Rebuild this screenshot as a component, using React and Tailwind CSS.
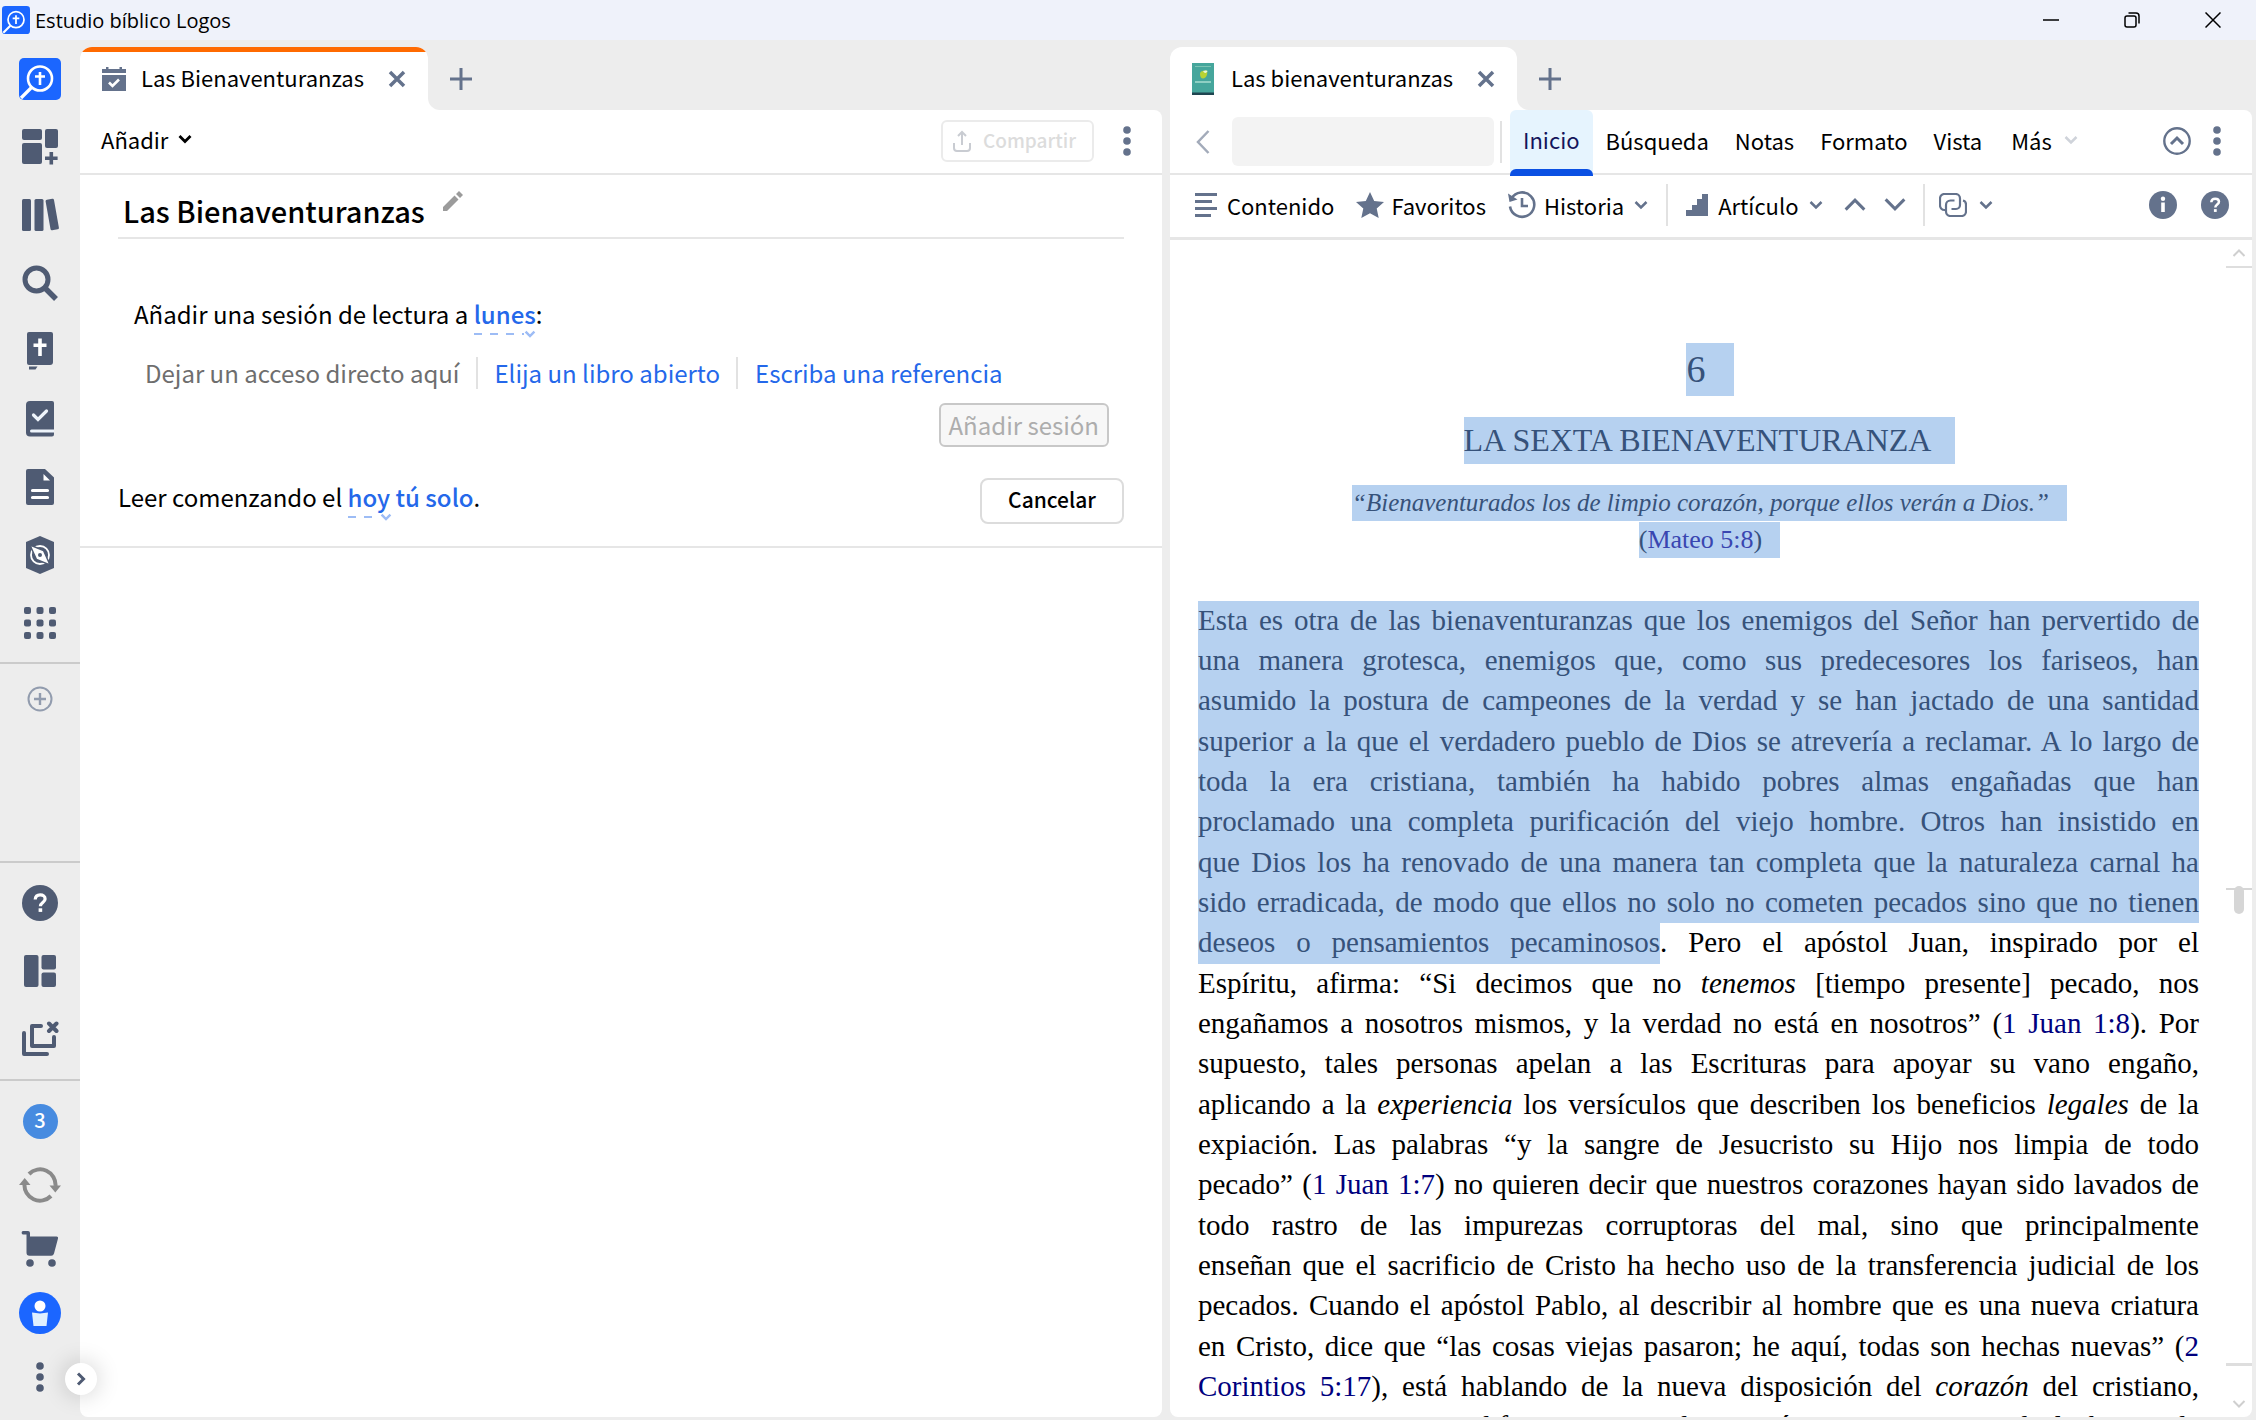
/* eslint-disable react/prop-types */
import React from 'react'

const slate = '#64728c'

const LogosMark = ({ className }) => (
  <svg viewBox="0 0 42 42" className={className} aria-hidden="true">
    <rect width="42" height="42" rx="5" fill="#1b66ff" />
    <circle cx="21" cy="20.500" r="12" fill="none" stroke="#fff" strokeWidth="2.600" />
    <path d="M12.500 29.500L2 40" stroke="#fff" strokeWidth="3.200" />
    <path d="M21 14v13M16 18.500h10" stroke="#fff" strokeWidth="2.600" />
  </svg>
)

const LayoutAddIcon = () => (
  <svg viewBox="0 0 36 36" className="size-9" fill="#4f5b73">
    <rect width="20" height="11" rx="2" />
    <rect y="14" width="20" height="21" rx="2" />
    <rect x="23" width="13" height="19" rx="2" />
    <path d="M27.500 23h3.600v4.500h4.500v3.600h-4.500v4.500h-3.600v-4.500H23v-3.600h4.500z" />
  </svg>
)

const LibraryIcon = () => (
  <svg viewBox="0 0 38 34" className="h-[34px] w-[38px]" fill="#4f5b73">
    <rect x="1" y="1" width="9" height="32" rx="1.500" />
    <rect x="13.500" y="1" width="9" height="32" rx="1.500" />
    <rect x="27" y="1" width="8.500" height="31" rx="1.500" transform="rotate(-10 31 16.500)" />
  </svg>
)

const SearchIcon = () => (
  <svg viewBox="0 0 36 36" className="size-9" fill="none" stroke="#4f5b73">
    <circle cx="14.500" cy="14.500" r="11.500" strokeWidth="5" />
    <path d="M23 23l11 11" strokeWidth="5.500" />
  </svg>
)

const BibleIcon = () => (
  <svg viewBox="0 0 28 40" className="h-10 w-7" fill="#4f5b73">
    <path d="M3 1h22a2 2 0 0 1 2 2v28a3 3 0 0 1-3 3H3a2 2 0 0 1-2-2V3a2 2 0 0 1 2-2z" />
    <path d="M12.200 7.500h3.600v5h4.700v3.600h-4.700V25h-3.600v-8.900H7.500v-3.600h4.700z" fill="#fff" />
    <path d="M3 35.500h8.500l-2 3H3z" />
  </svg>
)

const CourseIcon = () => (
  <svg viewBox="0 0 28 36" className="h-9 w-7">
    <path d="M4 0h22a2 2 0 0 1 2 2v31.500a2 2 0 0 1-2 2H4a4 4 0 0 1-4-4V4a4 4 0 0 1 4-4z" fill="#4f5b73" />
    <path d="M28 30H5.500" stroke="#eef4fb" strokeWidth="3" strokeLinecap="round" />
    <path d="M7.500 14l4.500 4.500L20.500 10" fill="none" stroke="#eef4fb" strokeWidth="3.200" strokeLinecap="round" />
  </svg>
)

const DocumentIcon = () => (
  <svg viewBox="0 0 28 36" className="h-9 w-7">
    <path d="M2 0h17l9 8.500V34a2 2 0 0 1-2 2H2a2 2 0 0 1-2-2V2a2 2 0 0 1 2-2z" fill="#4f5b73" />
    <path d="M17.500 5l6.500 6.500h-6.500z" fill="#fff" />
    <path d="M6.500 21.500h15M6.500 28.500h15" stroke="#fff" strokeWidth="3.200" strokeLinecap="round" />
  </svg>
)

const FactbookIcon = () => (
  <svg viewBox="0 0 28 38" className="h-[38px] w-7">
    <path d="M14 0l14 6v26l-14 6-14-6V6z" fill="#4f5b73" />
    <circle cx="14" cy="19" r="9" fill="none" stroke="#fff" strokeWidth="1.800" />
    <path d="M4 9l13.500 5.500L24 29l-13.500-5.500z" fill="#fff" stroke="#4f5b73" strokeWidth="1.400" />
    <circle cx="14" cy="19" r="2" fill="#4f5b73" />
  </svg>
)

const GridIcon = () => (
  <svg viewBox="0 0 32 32" className="size-8" fill="#4f5b73">
    {[0, 12.5, 25].map((y) =>
      [0, 12.5, 25].map((x) => (
        <rect key={`${x}-${y}`} x={x} y={y} width="7" height="7" rx="2" />
      )),
    )}
  </svg>
)

const CirclePlusIcon = () => (
  <svg viewBox="0 0 26 26" className="size-[26px]" fill="none" stroke="#929cae" strokeWidth="2">
    <circle cx="13" cy="13" r="11.500" />
    <path d="M13 7v12M7 13h12" strokeWidth="2.400" />
  </svg>
)

const HelpIcon = ({ className, fill }) => (
  <svg viewBox="0 0 36 36" className={className}>
    <circle cx="18" cy="18" r="18" fill={fill} />
    <path
      d="M13.200 14.500c.2-3 2.200-4.600 5-4.600 2.900 0 4.900 1.600 4.900 4 0 3.500-4.700 3.600-4.700 7.300"
      fill="none"
      stroke="#fff"
      strokeWidth="3.200"
    />
    <rect x="16.600" y="23.300" width="3.600" height="3.600" fill="#fff" />
  </svg>
)

const PanelsIcon = () => (
  <svg viewBox="0 0 32 32" className="size-8" fill="#4f5b73">
    <rect width="14.500" height="32" rx="2" />
    <rect x="17.500" width="14.500" height="14.500" rx="2" />
    <rect x="17.500" y="17.500" width="14.500" height="14.500" rx="2" />
  </svg>
)

const CloseAllIcon = () => (
  <svg
    viewBox="0 0 38 38"
    className="size-[38px]"
    fill="none"
    stroke="#4f5b73"
    strokeWidth="4"
    strokeLinecap="round"
    strokeLinejoin="round"
  >
    <path d="M20 6h-9v20h22v-9" />
    <path d="M3 13v21h23" />
    <path d="M28 3.500l7.500 7.500M35.500 3.500L28 11" />
  </svg>
)

const SyncIcon = () => (
  <svg viewBox="0 0 42 36" className="h-9 w-[42px]">
    <g fill="none" stroke="#8a8a8a" strokeWidth="4">
      <path d="M10 7A15.500 15.500 0 0 1 36.500 19" />
      <path d="M32 29A15.500 15.500 0 0 1 5.500 17" />
    </g>
    <path d="M30.500 18.500H42l-5.700 7zM0 18l5.700-7 5.800 7z" fill="#8a8a8a" />
  </svg>
)

const CartIcon = () => (
  <svg viewBox="0 0 40 36" className="h-9 w-10" fill="#4f5b73">
    <path d="M3 0h5a2 2 0 0 1 2 2v3.500h26.500a1.500 1.500 0 0 1 1.500 2l-4 15a3 3 0 0 1-3 2.200H9.500a3 3 0 0 1-3-3V3.500H3A1.800 1.800 0 0 1 3 0z" />
    <circle cx="10" cy="32" r="3.800" />
    <circle cx="32" cy="32" r="3.800" />
  </svg>
)

const AvatarIcon = () => (
  <svg viewBox="0 0 42 42" className="size-[42px]">
    <circle cx="21" cy="21" r="21" fill="#1b66ff" />
    <circle cx="21" cy="14" r="5.500" fill="#fff" />
    <path d="M13 20.500c3 0 5 1 8 1s5-1 8-1L27.500 34h-13z" fill="#dff0ff" />
  </svg>
)

const Dots = ({ fill }) => (
  <svg viewBox="0 0 8 30" className="h-[30px] w-2" fill={fill}>
    <circle cx="4" cy="4" r="3.800" />
    <circle cx="4" cy="15" r="3.800" />
    <circle cx="4" cy="26" r="3.800" />
  </svg>
)

const Chevron = ({ className, stroke = slate, strokeWidth = 2.5 }) => (
  <svg viewBox="0 0 14 10" className={className} fill="none" stroke={stroke} strokeWidth={strokeWidth}>
    <path d="M1.500 2L7 7.500 12.500 2" />
  </svg>
)

const CrossIcon = () => (
  <svg viewBox="0 0 18 18" className="size-[18px]" stroke={slate} strokeWidth="3.500">
    <path d="M2 2l14 14M16 2L2 16" />
  </svg>
)

const PlusIcon = () => (
  <svg viewBox="0 0 22 22" className="size-[22px]" stroke={slate} strokeWidth="3">
    <path d="M11 0v22M0 11h22" />
  </svg>
)

const CalendarIcon = () => (
  <svg viewBox="0 0 24 24" className="size-6" fill={slate}>
    <path d="M0 2h4V0h2.500v2h11V0H20v2h4v4H0zM0 8h24v16H0z" />
    <path d="M7 15.500l3.500 3.500 6.500-6.500" fill="none" stroke="#fff" strokeWidth="2.600" />
  </svg>
)

const CoverIcon = () => (
  <svg viewBox="0 0 22 32" className="h-8 w-[22px]">
    <rect width="22" height="32" fill="#46a69c" />
    <path d="M3 3.500h16" stroke="#7cc4b4" strokeWidth="1" />
    <path d="M8 11c0-3 3-3.500 7-3.500 1 4-1 8-4 8-2 0-3-2-3-4.500z" fill="#b7d334" />
    <path d="M11 8c2-1 4-.5 4.500 0-.5 2-3 3-4.500 0z" fill="#e9f6d6" />
    <path d="M3 19h16" stroke="#a9ddd0" strokeWidth="1.600" />
    <rect y="29.500" width="22" height="2.500" fill="#1f4550" />
  </svg>
)

const topTools = [
  { label: 'Inicio de Logos', icon: <LogosMark className="size-[42px]" /> },
  { label: 'Diseños', icon: <LayoutAddIcon /> },
  { label: 'Biblioteca', icon: <LibraryIcon /> },
  { label: 'Buscar', icon: <SearchIcon /> },
  { label: 'Biblia', icon: <BibleIcon /> },
  { label: 'Cursos', icon: <CourseIcon /> },
  { label: 'Documentos', icon: <DocumentIcon /> },
  { label: 'Factbook', icon: <FactbookIcon /> },
  { label: 'Herramientas', icon: <GridIcon /> },
]

const midTools = [
  { label: 'Ayuda', icon: <HelpIcon className="size-9" fill="#4f5b73" /> },
  { label: 'Paneles', icon: <PanelsIcon /> },
  { label: 'Cerrar todo', icon: <CloseAllIcon /> },
]

const Sidebar = () => (
  <nav className="flex w-20 shrink-0 flex-col">
    <div className="border-b-2 border-[#cbcbcb] py-[5px]">
      {topTools.map(({ label, icon }) => (
        <button key={label} type="button" aria-label={label} className="flex h-[68px] w-full items-center justify-center">
          {icon}
        </button>
      ))}
    </div>
    <div className="flex-1 border-b-2 border-[#cbcbcb]">
      <button type="button" aria-label="Añadir acceso" className="flex h-[70px] w-full items-center justify-center">
        <CirclePlusIcon />
      </button>
    </div>
    <div className="border-b-2 border-[#cbcbcb] py-1.5">
      {midTools.map(({ label, icon }) => (
        <button key={label} type="button" aria-label={label} className="flex h-[68px] w-full items-center justify-center">
          {icon}
        </button>
      ))}
    </div>
    <div className="pt-2 pb-[11px] [&>*]:flex [&>*]:h-16 [&>*]:w-full [&>*]:items-center [&>*]:justify-center">
      <button type="button">
        <span className="flex size-[35px] items-center justify-center rounded-full bg-[#478be0] pb-0.5 text-xl font-medium text-white">
          3
        </span>
      </button>
      <button type="button" aria-label="Sincronizar">
        <SyncIcon />
      </button>
      <button type="button" aria-label="Tienda">
        <CartIcon />
      </button>
      <button type="button" aria-label="Cuenta">
        <AvatarIcon />
      </button>
      <div className="relative">
        <button type="button" aria-label="Más opciones">
          <Dots fill="#4f5b73" />
        </button>
        <button
          type="button"
          aria-label="Expandir"
          className="absolute top-[18px] left-[65px] z-10 flex size-8 items-center justify-center rounded-full bg-white shadow-[0_0_24px_rgba(0,0,0,0.2)]"
        >
          <Chevron className="h-[10px] w-[14px] -rotate-90" stroke="#4f5b73" strokeWidth={3} />
        </button>
      </div>
    </div>
  </nav>
)

const TitleBar = () => (
  <header className="flex h-10 items-center bg-[#eff2fa]">
    <LogosMark className="ml-0.5 size-7" />
    <h1 className="ml-[5px] flex-1 pt-0.5 font-['Open_Sans',sans-serif] text-xl leading-6">Estudio bíblico Logos</h1>
    <div className="flex pr-[3px] [&>button]:flex [&>button]:h-10 [&>button]:w-[81px] [&>button]:items-center [&>button]:justify-center">
      <button type="button" aria-label="Minimizar">
        <svg viewBox="0 0 16 16" className="size-4" stroke="#000" strokeWidth="1.500">
          <path d="M0 8h16" />
        </svg>
      </button>
      <button type="button" aria-label="Restaurar">
        <svg viewBox="0 0 16 16" className="size-4" fill="none" stroke="#000" strokeWidth="1.500">
          <rect x="1" y="4" width="11" height="11" rx="2" />
          <path d="M4.500 1H12a3 3 0 0 1 3 3v7.500" />
        </svg>
      </button>
      <button type="button" aria-label="Cerrar">
        <svg viewBox="0 0 16 16" className="size-4" stroke="#000" strokeWidth="1.500">
          <path d="M.5.5l15 15M15.500.5l-15 15" />
        </svg>
      </button>
    </div>
  </header>
)

const TabStrip = ({ icon, title, active }) => (
  <div className="mt-[7px] flex h-[63px] bg-white">
    <div className="bg-[#ededed]">
      <div className="flex h-full items-center overflow-hidden rounded-t-xl bg-white">
        <div className={`flex h-full items-center px-[22px] ${active ? 'border-t-[5px] border-[#ff6a00] pb-[5px]' : ''}`}>
          {icon}
          <span className={active ? 'ml-[15px] pb-1' : 'ml-[17px] pb-1'}>{title}</span>
          <button type="button" aria-label="Cerrar pestaña" className="ml-6">
            <CrossIcon />
          </button>
        </div>
      </div>
    </div>
    <div className="flex flex-1 items-center rounded-bl-xl bg-[#ededed] pl-[22px]">
      <button type="button" aria-label="Nueva pestaña">
        <PlusIcon />
      </button>
    </div>
  </div>
)

const MenuWord = ({ children, underline }) => (
  <button type="button" className="relative font-medium text-[#2468ea]">
    {children}
    <span className={`absolute top-full left-0 flex items-center ${underline}`}>
      <span className="h-0.5 flex-1 bg-[repeating-linear-gradient(90deg,#9dbcf5_0_8px,transparent_8px_16px)]" />
      <Chevron className="h-2 w-3" stroke="#9dbcf5" strokeWidth={3} />
    </span>
  </button>
)

const ReadingPlanPanel = () => (
  <section className="flex min-w-0 flex-[1082] flex-col">
    <TabStrip active icon={<CalendarIcon />} title="Las Bienaventuranzas" />
    <div className="flex-1 rounded-tr-lg rounded-b-lg bg-white">
      <div className="flex h-[65px] items-center border-b-2 border-[#e6e6e6] pr-[31px] pb-0.5 pl-[21px]">
        <button type="button" className="flex items-center gap-2.5 pb-1">
          Añadir
          <Chevron className="h-[10px] w-[14px]" stroke="#000" strokeWidth={2.8} />
        </button>
        <button
          type="button"
          disabled
          className="mr-[29px] ml-auto flex h-[42px] items-center gap-3 rounded-md border-2 border-[#ebebeb] pr-4 pl-2.5 text-[19px] leading-6 font-medium text-[#dcdcdc]"
        >
          <svg viewBox="0 0 18 22" className="h-[22px] w-[18px]" fill="none" stroke="#c9ccd2" strokeWidth="2">
            <path d="M9 15V2M5 6l4-4 4 4M1 13v5a3 3 0 0 0 3 3h10a3 3 0 0 0 3-3v-5" />
          </svg>
          <span className="pb-0.5">Compartir</span>
        </button>
        <button type="button" aria-label="Menú del panel">
          <Dots fill={slate} />
        </button>
      </div>

      <div className="px-[38px] text-2xl leading-8">
        <div className="flex h-16 items-center border-b-2 border-[#e6e6e6] pt-2 pl-[5px]">
          <h2 className="text-[29px] leading-10 font-medium">Las Bienaventuranzas</h2>
          <button type="button" aria-label="Editar título" className="ml-[18px] self-start pt-2">
            <svg viewBox="0 0 20 20" className="size-5" fill="#9b9b9b">
              <path d="M0 16L11.500 4.500l4 4L4 20H0zM13 3l3-3 4 4-3 3z" />
            </svg>
          </button>
        </div>

        <p className="mt-[59px] ml-4">
          Añadir una sesión de lectura a <MenuWord underline="w-[62px]">lunes</MenuWord>:
        </p>
        <div className="mt-[27px] ml-[27px] flex">
          <span className="border-r-2 border-[#e2e2e2] pr-[17px] text-[#6e6e6e]">Dejar un acceso directo aquí</span>
          <button type="button" className="border-r-2 border-[#e2e2e2] px-4 text-[#2468ea]">
            Elija un libro abierto
          </button>
          <button type="button" className="pl-[17px] text-[#2468ea]">
            Escriba una referencia
          </button>
        </div>
        <div className="mt-[14px] mr-[15px] flex justify-end">
          <button
            type="button"
            disabled
            className="h-11 rounded-md border-2 border-[#c8c8c8] bg-[#f7f7f7] px-2 text-[#adadad]"
          >
            Añadir sesión
          </button>
        </div>
        <div className="mt-[31px] flex items-center justify-between">
          <p className="pb-2">
            Leer comenzando el <MenuWord underline="w-[44px]">hoy</MenuWord>{' '}
            <button type="button" className="font-medium text-[#2468ea]">
              tú solo
            </button>
            .
          </p>
          <button
            type="button"
            className="h-[46px] w-36 rounded-lg border-2 border-[#dcdcdc] pb-1 text-[21px] font-medium"
          >
            Cancelar
          </button>
        </div>
      </div>
      <hr className="mt-[22px] border-t-2 border-[#e6e6e6]" />
    </div>
  </section>
)

const sections = ['Búsqueda', 'Notas', 'Formato', 'Vista']

const ResourceToolbar = () => (
  <>
    <div className="flex h-[65px] border-b-2 border-[#e6e6e6]">
      <button type="button" aria-label="Atrás" className="ml-[26px]">
        <svg viewBox="0 0 14 24" className="h-6 w-3.5" fill="none" stroke="#a3abba" strokeWidth="2.500">
          <path d="M12.500 1L2 12l10.500 11" />
        </svg>
      </button>
      <input
        type="text"
        aria-label="Referencia"
        className="my-auto ml-[22px] h-[49px] w-[262px] rounded-md bg-[#f3f3f3] px-3 outline-none"
      />
      <span className="my-auto mr-2 ml-1.5 h-[42px] w-0.5 bg-[#e2e2e2]" />
      <button
        type="button"
        className="relative h-16 rounded-t-md bg-[#e6f4fe] px-[13px] pb-1.5 text-[#14145c] after:absolute after:inset-x-0 after:-bottom-0.5 after:h-[7px] after:rounded-t-md after:bg-[#0b50e3]"
      >
        Inicio
      </button>
      {sections.map((label) => (
        <button key={label} type="button" className="px-[13px] pb-1">
          {label}
        </button>
      ))}
      <button type="button" className="flex items-center gap-3 px-4 pb-1">
        Más
        <Chevron className="h-[10px] w-[14px]" stroke="#cfd3da" />
      </button>
      <div className="mr-[31px] ml-auto flex items-center gap-[22px] pb-0.5">
        <button type="button" aria-label="Contraer barra">
          <svg viewBox="0 0 28 28" className="size-7" fill="none" stroke={slate} strokeWidth="2.400">
            <circle cx="14" cy="14" r="12.700" />
            <path d="M8 17l6-6 6 6" strokeWidth="3" />
          </svg>
        </button>
        <button type="button" aria-label="Menú del recurso">
          <Dots fill={slate} />
        </button>
      </div>
    </div>

    <div className="flex h-[65px] items-center border-b-[3px] border-[#e6e6e6] pb-[3px] pl-[25px]">
      <button type="button" className="flex items-center gap-2.5">
        <svg viewBox="0 0 22 26" className="h-[26px] w-[22px]" stroke={slate} strokeWidth="3">
          <path d="M0 2.500h22M0 9.500h17M0 16.500h22M0 23.500h16" />
        </svg>
        Contenido
      </button>
      <button type="button" className="ml-[22px] flex items-center gap-[7px]">
        <svg viewBox="0 0 28 26" className="h-[26px] w-7" fill={slate}>
          <path d="M14 0l4.200 9 9.800 1-7.300 6.500 2 9.500L14 21.300 5.300 26l2-9.500L0 10l9.800-1z" />
        </svg>
        Favoritos
      </button>
      <button type="button" className="ml-[22px] flex items-center gap-2">
        <svg viewBox="0 0 28 28" className="size-7" fill="none" stroke={slate} strokeWidth="2.600">
          <path d="M3.500 7.500A12.200 12.200 0 1 1 2 15.500" />
          <path d="M14 7v8h6" />
          <path d="M0 2.500L1.500 11l8-2.500z" fill={slate} stroke="none" />
        </svg>
        Historia
        <Chevron className="ml-0.5 h-[10px] w-[14px]" />
      </button>
      <span className="mx-[18px] h-[42px] w-0.5 bg-[#e2e2e2]" />
      <button type="button" className="flex items-center gap-2.5">
        <svg viewBox="0 0 22 22" className="size-[22px]" fill={slate}>
          <path d="M16 0h6v22H0v-6h6v-5h5V5h5z" />
        </svg>
        Artículo
        <Chevron className="h-[10px] w-[14px]" />
      </button>
      <button type="button" aria-label="Artículo anterior" className="ml-5">
        <Chevron className="h-[17px] w-6 rotate-180" strokeWidth={1.8} />
      </button>
      <button type="button" aria-label="Artículo siguiente" className="ml-4">
        <Chevron className="h-[17px] w-6" strokeWidth={1.8} />
      </button>
      <span className="mr-[14px] ml-4 h-[42px] w-0.5 bg-[#e2e2e2]" />
      <button type="button" aria-label="Vincular panel" className="flex items-center gap-3">
        <svg viewBox="0 0 28 24" className="h-6 w-7" fill="none" stroke={slate} strokeWidth="2.200">
          <path d="M8 17H5.500A4.500 4.500 0 0 1 1 12.500v-7A4.500 4.500 0 0 1 5.500 1h11A4.500 4.500 0 0 1 21 5.500V12a4 4 0 0 1-4 4h-4.500" />
          <path d="M24 7.500c2 .5 3 2 3 4v7a4.500 4.500 0 0 1-4.500 4.500h-11A4.500 4.500 0 0 1 7 18.500V12a4.500 4.500 0 0 1 4.500-4.500h4" />
        </svg>
        <Chevron className="h-[10px] w-[14px]" />
      </button>
      <div className="mr-[23px] ml-auto flex gap-6">
        <button type="button" aria-label="Información">
          <svg viewBox="0 0 28 28" className="size-7">
            <circle cx="14" cy="14" r="14" fill={slate} />
            <path d="M14 11.500V21" stroke="#fff" strokeWidth="3.600" />
            <circle cx="14" cy="7.800" r="2.200" fill="#fff" />
          </svg>
        </button>
        <button type="button" aria-label="Ayuda del recurso">
          <HelpIcon className="size-7" fill={slate} />
        </button>
      </div>
    </div>
  </>
)

const Ref = ({ children }) => (
  <a href="#ref" className="text-[#00007e]">
    {children}
  </a>
)

const selectedLines = [
  'Esta es otra de las bienaventuranzas que los enemigos del Señor han pervertido de',
  'una manera grotesca, enemigos que, como sus predecesores los fariseos, han',
  'asumido la postura de campeones de la verdad y se han jactado de una santidad',
  'superior a la que el verdadero pueblo de Dios se atrevería a reclamar. A lo largo de',
  'toda la era cristiana, también ha habido pobres almas engañadas que han',
  'proclamado una completa purificación del viejo hombre. Otros han insistido en',
  'que Dios los ha renovado de una manera tan completa que la naturaleza carnal ha',
  'sido erradicada, de modo que ellos no solo no cometen pecados sino que no tienen',
]

const bodyLines = [
  <>
    <span className="bg-[#b6d1f0] pt-[3px] pb-1.5 text-[#36527a]">deseos o pensamientos pecaminosos</span>. Pero el
    apóstol Juan, inspirado por el
  </>,
  <>
    Espíritu, afirma: “Si decimos que no <i>tenemos</i> [tiempo presente] pecado, nos
  </>,
  <>
    engañamos a nosotros mismos, y la verdad no está en nosotros” (<Ref>1 Juan 1:8</Ref>). Por
  </>,
  'supuesto, tales personas apelan a las Escrituras para apoyar su vano engaño,',
  <>
    aplicando a la <i>experiencia</i> los versículos que describen los beneficios <i>legales</i> de la
  </>,
  'expiación. Las palabras “y la sangre de Jesucristo su Hijo nos limpia de todo',
  <>
    pecado” (<Ref>1 Juan 1:7</Ref>) no quieren decir que nuestros corazones hayan sido lavados de
  </>,
  'todo rastro de las impurezas corruptoras del mal, sino que principalmente',
  'enseñan que el sacrificio de Cristo ha hecho uso de la transferencia judicial de los',
  'pecados. Cuando el apóstol Pablo, al describir al hombre que es una nueva criatura',
  <>
    en Cristo, dice que “las cosas viejas pasaron; he aquí, todas son hechas nuevas” (<Ref>2</Ref>
  </>,
  <>
    <Ref>Corintios 5:17</Ref>), está hablando de la nueva disposición del <i>corazón</i> del cristiano,
  </>,
  'que es una cosa muy diferente a una disposición innata y nueva de la buena de',
]

const Article = () => (
  <article className="min-w-0 flex-1 overflow-hidden pt-[103px] pr-[27px] pl-7 font-['Liberation_Serif',serif] text-[29px] leading-[38px]">
    <div className="-mr-[22px] flex flex-col items-center text-[#36527a]">
      <h2 className="bg-[#b6d1f0] pr-7 pl-px text-[38px] leading-[53px]">6</h2>
      <h3 className="mt-[21px] bg-[#b6d1f0] pr-6 text-[32px] leading-[47px]">LA SEXTA BIENAVENTURANZA</h3>
      <p className="mt-[21px] bg-[#b6d1f0] pr-[18px] text-[25px] leading-9 italic">
        “Bienaventurados los de limpio corazón, porque ellos verán a Dios.”
      </p>
      <p className="mt-px bg-[#b6d1f0] pr-[18px] text-[26px] leading-9">
        (
        <a href="#ref" className="text-[#3946b0]">
          Mateo 5:8
        </a>
        )
      </p>
    </div>
    <p className="mt-[43px] [&>span]:block [&>span]:h-10 [&>span]:[text-align-last:justify] [&>span]:whitespace-nowrap [&>span:nth-child(3n)]:h-[41px]">
      {selectedLines.map((line) => (
        <span key={line} className="bg-[#b6d1f0] text-[#36527a]">
          {line}
        </span>
      ))}
      {bodyLines.map((line, i) => (
        // eslint-disable-next-line react/no-array-index-key
        <span key={i}>{line}</span>
      ))}
    </p>
  </article>
)

const ScrollRail = () => (
  <div className="flex w-[26px] shrink-0 flex-col items-center">
    <button type="button" aria-label="Subir" className="flex h-7 w-full items-center justify-center border-b-2 border-[#dedede]">
      <Chevron className="h-[10px] w-[14px] rotate-180" stroke="#cfcfcf" strokeWidth={2} />
    </button>
    <div className="flex-[619]" />
    <div className="relative flex h-7 w-full justify-center">
      <span className="w-2.5 rounded-full bg-[#d6d6d6]" />
      <span className="absolute inset-x-0 top-0.5 h-0.5 bg-[#d6d6d6]" />
    </div>
    <div className="flex-[449]" />
    <div className="flex h-[54px] w-full items-end justify-center border-t-[3px] border-[#dedede] pb-2">
      <button type="button" aria-label="Bajar">
        <Chevron className="h-[10px] w-[14px]" stroke="#cfcfcf" strokeWidth={2} />
      </button>
    </div>
  </div>
)

const ResourcePanel = () => (
  <section className="flex min-w-0 flex-[1082] flex-col">
    <TabStrip icon={<CoverIcon />} title="Las bienaventuranzas" />
    <div className="flex min-h-0 flex-1 flex-col overflow-hidden rounded-tr-lg rounded-b-lg bg-white">
      <ResourceToolbar />
      <div className="flex min-h-0 flex-1">
        <Article />
        <ScrollRail />
      </div>
    </div>
  </section>
)

export default function App() {
  return (
    <div className="flex h-screen flex-col overflow-hidden bg-[#ededed] font-['Noto_Sans_CJK_SC',sans-serif] text-[22px] leading-8 text-black">
      <TitleBar />
      <div className="flex min-h-0 flex-1">
        <Sidebar />
        <main className="flex min-w-0 flex-1 gap-2 pr-1 pb-[3px]">
          <ReadingPlanPanel />
          <ResourcePanel />
        </main>
      </div>
    </div>
  )
}
